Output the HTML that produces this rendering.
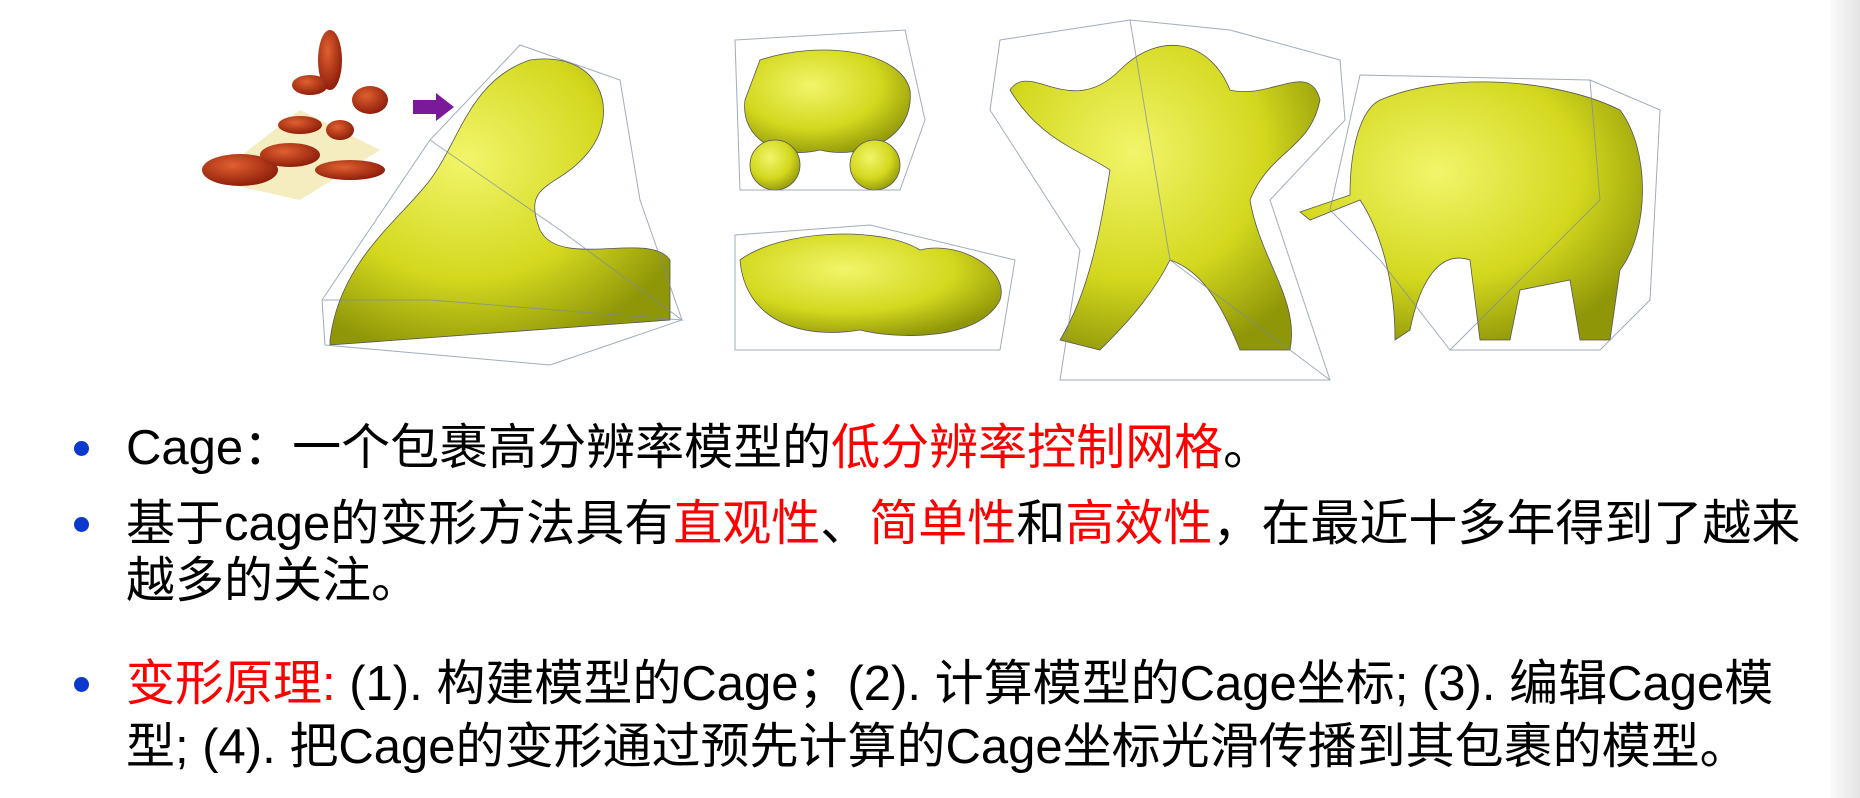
<!DOCTYPE html>
<html><head><meta charset="utf-8"><style>
html,body{margin:0;padding:0;width:1860px;height:798px;overflow:hidden;background:#fff;position:relative}
.g{position:absolute;top:0;right:0;width:30px;height:798px;background:linear-gradient(90deg,#fafafa,#e4e4e4)}
.t{position:absolute;left:126px;font-family:"Liberation Sans","Noto Sans CJK SC",sans-serif;font-size:49px;color:#000;white-space:nowrap;line-height:60px}
.r{color:#f00}
.b{position:absolute;left:74px;width:15px;height:15px;border-radius:50%;background:#0a3acd}
</style></head><body>
<div class="g"></div>
<svg width="1860" height="400" style="position:absolute;left:0;top:0">
<defs>
<radialGradient id="y" cx="40%" cy="35%" r="70%"><stop offset="0" stop-color="#f2f56a"/><stop offset="0.6" stop-color="#d3d81e"/><stop offset="1" stop-color="#8f9608"/></radialGradient>
<radialGradient id="rd" cx="40%" cy="35%" r="70%"><stop offset="0" stop-color="#e06030"/><stop offset="1" stop-color="#8a1a08"/></radialGradient>
</defs>
<g fill="url(#rd)">
<polygon points="210,180 300,110 380,150 300,200" fill="#f3e7b0" opacity="0.8"/>
<ellipse cx="240" cy="170" rx="38" ry="16"/><ellipse cx="290" cy="155" rx="30" ry="12"/><ellipse cx="350" cy="170" rx="35" ry="10"/>
<ellipse cx="330" cy="60" rx="12" ry="30"/><ellipse cx="310" cy="85" rx="18" ry="10"/><ellipse cx="370" cy="100" rx="18" ry="14"/><ellipse cx="300" cy="125" rx="22" ry="9"/><ellipse cx="340" cy="130" rx="14" ry="10"/>
</g>
<polygon points="413,100 436,100 436,93 454,107 436,121 436,114 413,114" fill="#7a1a9a"/>
<g fill="url(#y)" stroke="#555" stroke-width="0.8">
<path d="M330,340 C340,260 400,220 430,180 C460,140 470,80 530,60 C600,50 620,110 590,150 C560,190 520,180 540,230 C560,270 650,230 670,260 L670,320 L330,345 Z"/>
<path d="M760,60 C820,40 900,50 910,90 C915,140 860,160 820,150 C780,160 740,140 745,100 Z"/>
<circle cx="775" cy="165" r="25"/><circle cx="875" cy="165" r="25"/>
<path d="M740,260 C780,230 880,225 920,250 C960,240 1010,270 1000,300 C980,340 900,340 860,330 C800,340 745,320 740,260 Z"/>
<path d="M1120,70 C1160,30 1210,40 1230,90 C1270,100 1310,60 1320,100 C1310,150 1270,150 1250,200 C1260,260 1300,300 1290,350 L1240,350 C1220,300 1200,270 1170,260 C1150,300 1120,330 1100,350 L1060,340 C1090,290 1100,230 1110,170 C1080,150 1040,140 1010,90 C1030,60 1070,120 1120,70 Z"/>
<path d="M1380,100 C1450,70 1560,80 1620,110 C1650,150 1650,230 1620,270 L1610,340 L1580,340 L1570,280 L1520,290 L1510,340 L1480,340 L1470,260 C1440,250 1420,280 1410,330 L1395,340 C1395,280 1380,230 1360,200 L1310,220 L1300,212 L1350,195 C1350,150 1360,110 1380,100 Z"/>
</g>
<g fill="none" stroke="#7a8aa0" stroke-width="1" opacity="0.7">
<polygon points="322,300 430,140 520,45 620,80 640,200 682,320 550,365 325,345"/>
<polyline points="430,140 560,230 682,320 430,300 322,300"/>
<polygon points="735,40 905,30 925,120 900,190 740,190"/>
<polygon points="735,235 870,225 1015,260 1000,350 735,350"/>
<polygon points="1000,40 1130,20 1230,30 1340,60 1345,120 1270,200 1330,380 1060,380 1080,250 990,110"/>
<polyline points="1130,20 1170,260 1330,380"/>
<polygon points="1360,75 1590,80 1660,110 1650,300 1600,350 1450,350 1380,260 1330,210"/>
<polyline points="1590,80 1600,200 1450,350"/>
</g>
</svg>
<div class="b" style="top:441px"></div>
<div class="t" style="top:418px">Cage：一个包裹高分辨率模型的<span class="r">低分辨率控制网格</span>。</div>
<div class="b" style="top:517px"></div>
<div class="t" style="top:494px">基于cage的变形方法具有<span class="r">直观性</span>、<span class="r">简单性</span>和<span class="r">高效性</span>，在最近十多年得到了越来</div>
<div class="t" style="top:551px">越多的关注。</div>
<div class="b" style="top:677px"></div>
<div class="t" style="top:654px"><span class="r">变形原理:</span> (1). 构建模型的Cage；(2). 计算模型的Cage坐标; (3). 编辑Cage模</div>
<div class="t" style="top:717px">型; (4). 把Cage的变形通过预先计算的Cage坐标光滑传播到其包裹的模型。</div>
</body></html>
